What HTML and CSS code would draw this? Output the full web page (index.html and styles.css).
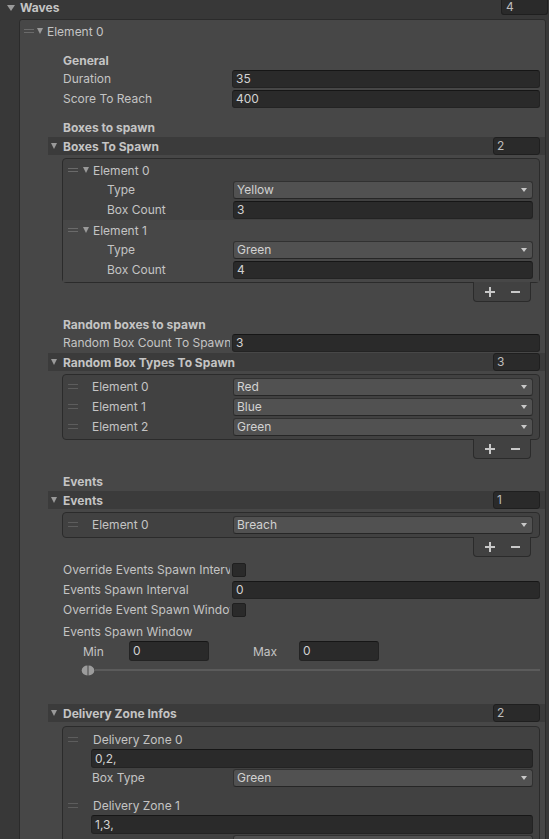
FILE: index.html
```html
<!DOCTYPE html>
<html>
<head>
<meta charset="utf-8">
<link rel="stylesheet" href="styles.css">
</head>
<body>
<div class="waves-row">
  <span class="tri big"></span><span class="bold">Waves</span>
  <div class="count top-count">4</div>
</div>
<div class="elem-box">
  <div class="elem-head"><span class="handle"></span><span class="tri"></span><span class="elem-title">Element 0</span></div>
  <div class="content">
    <div class="hdr h-general">General</div>
    <div class="prop first"><div class="lbl">Duration</div><div class="tf">35</div></div>
    <div class="prop"><div class="lbl">Score To Reach</div><div class="tf">400</div></div>

    <div class="hdr h-boxes">Boxes to spawn</div>
    <div class="band"><span class="tri"></span><span class="band-title">Boxes To Spawn</span><div class="count">2</div></div>
    <div class="list">
      <div class="lel">
        <div class="lel-head"><span class="handle"></span><span class="tri sm"></span><span>Element 0</span></div>
        <div class="lprop"><div class="llbl">Type</div><div class="dd">Yellow</div></div>
        <div class="lprop"><div class="llbl">Box Count</div><div class="tf">3</div></div>
      </div>
      <div class="lel hover">
        <div class="lel-head"><span class="handle"></span><span class="tri sm"></span><span>Element 1</span></div>
        <div class="lprop"><div class="llbl">Type</div><div class="dd">Green</div></div>
        <div class="lprop"><div class="llbl">Box Count</div><div class="tf">4</div></div>
      </div>
    </div>
    <div class="footer"><span class="plus"></span><span class="minus"></span></div>

    <div class="hdr h-random">Random boxes to spawn</div>
    <div class="prop first"><div class="lbl">Random Box Count To Spawn</div><div class="tf">3</div></div>
    <div class="band band-gap"><span class="tri"></span><span class="band-title">Random Box Types To Spawn</span><div class="count">3</div></div>
    <div class="list simple">
      <div class="rrow"><span class="handle wide"></span><div class="rlbl">Element 0</div><div class="dd">Red</div></div>
      <div class="rrow"><span class="handle wide"></span><div class="rlbl">Element 1</div><div class="dd">Blue</div></div>
      <div class="rrow"><span class="handle wide"></span><div class="rlbl">Element 2</div><div class="dd">Green</div></div>
    </div>
    <div class="footer"><span class="plus"></span><span class="minus"></span></div>

    <div class="hdr h-events">Events</div>
    <div class="band"><span class="tri"></span><span class="band-title">Events</span><div class="count">1</div></div>
    <div class="list simple">
      <div class="rrow"><span class="handle wide"></span><div class="rlbl">Element 0</div><div class="dd">Breach</div></div>
    </div>
    <div class="footer"><span class="plus"></span><span class="minus"></span></div>

    <div class="prop override"><div class="lbl">Override Events Spawn Interval</div><div class="cb"></div></div>
    <div class="prop"><div class="lbl">Events Spawn Interval</div><div class="tf">0</div></div>
    <div class="prop"><div class="lbl">Override Event Spawn Window</div><div class="cb"></div></div>
    <div class="prop window"><div class="lbl">Events Spawn Window</div></div>
    <div class="mm">
      <div class="mm-lbl">Min</div><div class="tf mm-tf">0</div>
      <div class="mm-lbl mm-max">Max</div><div class="tf mm-tf">0</div>
    </div>
    <div class="slider">
      <svg class="thumb" width="14" height="11" viewBox="0 0 14 11"><path d="M6.5 0.5 A5.8 5 0 0 0 6.5 10.5 Z" fill="#9c9c9c"/><path d="M7.5 0.5 A5.8 5 0 0 1 7.5 10.5 Z" fill="#9c9c9c"/></svg>
      <div class="track"></div>
    </div>

    <div class="band band-delivery"><span class="tri"></span><span class="band-title">Delivery Zone Infos</span><div class="count">2</div></div>
    <div class="list dlist">
      <div class="dz">
        <div class="dz-head"><span class="handle wide"></span><span class="dz-title">Delivery Zone 0</span></div>
        <div class="tf dz-field">0,2,</div>
        <div class="dz-type"><div class="dz-lbl">Box Type</div><div class="dd">Green</div></div>
      </div>
      <div class="dz next">
        <div class="dz-head"><span class="handle wide"></span><span class="dz-title">Delivery Zone 1</span></div>
        <div class="tf dz-field">1,3,</div>
        <div class="dz-type"><div class="dz-lbl">Box Type</div><div class="dd">Yellow</div></div>
      </div>
    </div>
  </div>
</div>
</body>
</html>
```
FILE: styles.css
```css
* { box-sizing: border-box; }
html, body { margin: 0; padding: 0; }
body {
  background: #383838;
  font-family: Inter, "Noto Sans", "DejaVu Sans", sans-serif;
  font-size: 12px;
  color: #c4c4c4;
  width: 549px;
  height: 839px;
  overflow: hidden;
}
.bold { font-weight: 700; }

.tri {
  display: inline-block;
  width: 0; height: 0;
  border-left: 3.5px solid transparent;
  border-right: 3.5px solid transparent;
  border-top: 6px solid #9a9a9a;
  flex: 0 0 auto;
}
.tri.big { border-left-width: 4px; border-right-width: 4px; border-top-width: 6px; }
.tri.sm { border-left-width: 3px; border-right-width: 3px; border-top-width: 6px; }

.handle {
  display: inline-block;
  flex: 0 0 10px;
  width: 10px;
  height: 4px;
  border-top: 1px solid #6a6a6a;
  border-bottom: 1px solid #6a6a6a;
}
.handle.wide { height: 5px; border-color: #5d5d5d; margin-top: -2px; }

.count {
  width: 47px;
  height: 18px;
  background: #2a2a2a;
  border: 1px solid #1f1f1f;
  border-radius: 3px;
  padding-left: 3px;
  line-height: 16px;
  color: #bdbdbd;
  font-weight: 400;
  margin-left: auto;
}

.waves-row {
  display: flex;
  align-items: center;
  height: 15px;
}
.waves-row .tri { margin: 0 5px 0 7px; }
.top-count {
  align-self: flex-start;
  height: 15px;
  line-height: 14px;
  margin-right: 1px;
  padding-left: 4px;
  border-top: none;
  border-radius: 0 0 3px 3px;
}

.elem-box {
  margin: 4px 0 0 19px;
  width: 527px;
  min-height: 900px;
  background: #474747;
  border: 1px solid #2b2b2b;
  border-radius: 3px 3px 0 0;
}
.elem-head {
  display: flex;
  align-items: center;
  height: 22px;
  padding-left: 4px;
}
.elem-head .tri { margin: 0 4px 0 3px; }

.content { padding-left: 28px; }

.hdr {
  height: 18px;
  line-height: 18px;
  padding-left: 15px;
  font-weight: 700;
}
.h-general { margin-top: 10px; }
.h-boxes { margin-top: 11px; }
.h-random { margin-top: 14px; }
.h-events { margin-top: 14px; }

.prop {
  display: flex;
  align-items: center;
  height: 18px;
  margin-top: 2px;
  padding: 0 5px 0 15px;
}
.prop.first { margin-top: 0; }
.prop.override { margin-top: 4px; }
.prop.window { margin-top: 4px; }
.lbl {
  flex: 0 0 167px;
  margin-right: 2px;
  white-space: nowrap;
  overflow: hidden;
  line-height: 18px;
}

.tf {
  flex: 1;
  height: 18px;
  background: #2a2a2a;
  border: 1px solid #232323;
  border-top-color: #161616;
  border-radius: 3px;
  padding-left: 3px;
  line-height: 16px;
  color: #d2d2d2;
  white-space: nowrap;
}
.dd {
  flex: 1;
  position: relative;
  height: 18px;
  background: #515151;
  border: 1px solid #313131;
  border-bottom-color: #262626;
  border-radius: 3px;
  padding-left: 3px;
  line-height: 16px;
  color: #d2d2d2;
}
.dd::after {
  content: "";
  position: absolute;
  right: 5px;
  top: 6px;
  border-left: 3.5px solid transparent;
  border-right: 3.5px solid transparent;
  border-top: 4px solid #c8c8c8;
}
.cb {
  width: 14px;
  height: 14px;
  background: #2a2a2a;
  border: 1px solid #1f1f1f;
  border-radius: 2px;
}

.band {
  display: flex;
  align-items: center;
  height: 18px;
  background: #3b3b3b;
  padding-left: 3px;
  font-weight: 700;
}
.band .tri { margin-right: 6px; }
.band .count { margin-right: 5px; }
.band-gap { margin-top: 1px; }
.band-delivery { margin-top: 27px; }

.list {
  margin: 3px 5px 0 14px;
  background: #414141;
  border: 1px solid #2b2b2b;
  border-radius: 4px;
}
.list.simple { padding: 3px 0; }
.footer {
  display: flex;
  align-items: center;
  margin: -1px 14px 0 auto;
  width: 58px;
  height: 20px;
  background: #414141;
  border: 1px solid #2b2b2b;
  border-top: none;
  border-radius: 0 0 4px 4px;
  padding-left: 11px;
}
.plus {
  position: relative;
  width: 10px; height: 10px;
}
.plus::before, .plus::after, .minus::before {
  content: "";
  position: absolute;
  background: #c8c8c8;
}
.plus::before { left: 0; top: 4px; width: 10px; height: 2px; }
.plus::after { left: 4px; top: 0; width: 2px; height: 10px; }
.minus { position: relative; width: 9px; height: 10px; margin-left: 16px; }
.minus::before { left: 0; top: 4px; width: 9px; height: 2px; }

.lel { padding: 2px 0 1px; }
.lel.hover { background: #474747; padding: 1px 0 3px; }
.lel-head {
  display: flex;
  align-items: center;
  height: 18px;
  padding-left: 5px;
}
.lel-head .tri { margin: 0 4px 0 5px; }
.lprop {
  display: flex;
  align-items: center;
  height: 18px;
  margin-top: 2px;
  padding: 0 6px 0 44px;
}
.llbl { flex: 0 0 126px; line-height: 18px; }

.rrow {
  display: flex;
  align-items: center;
  height: 18px;
  padding: 0 6px 0 5px;
  margin-top: 2px;
}
.rrow:first-child { margin-top: 0; }
.rlbl { flex: 0 0 141px; margin-left: 14px; line-height: 18px; }

.mm {
  display: flex;
  align-items: center;
  height: 20px;
  padding-left: 35px;
}
.mm-lbl { flex: 0 0 46px; }
.mm-max { margin-left: 44px; }
.mm-tf { flex: 0 0 80px; height: 20px; line-height: 18px; }

.slider {
  display: flex;
  align-items: center;
  height: 14px;
  margin-top: 2px;
  padding: 0 5px 0 33px;
}
.thumb { flex: 0 0 14px; }
.track { flex: 1; height: 2px; background: #5b5b5b; }

.dlist { margin-top: 4px; padding-top: 4px; }
.dz.next { margin-top: 10px; }
.dz-head {
  display: flex;
  align-items: center;
  height: 18px;
  padding-left: 5px;
}
.dz-title { margin-left: 15px; line-height: 18px; }
.dz-field { display: block; height: 19px; margin: 0 6px 0 28px; line-height: 17px; }
.dz-type {
  display: flex;
  align-items: center;
  height: 18px;
  margin: 1px 6px 0 28px;
}
.dz-lbl { flex: 0 0 142px; padding-left: 1px; line-height: 18px; }
```
